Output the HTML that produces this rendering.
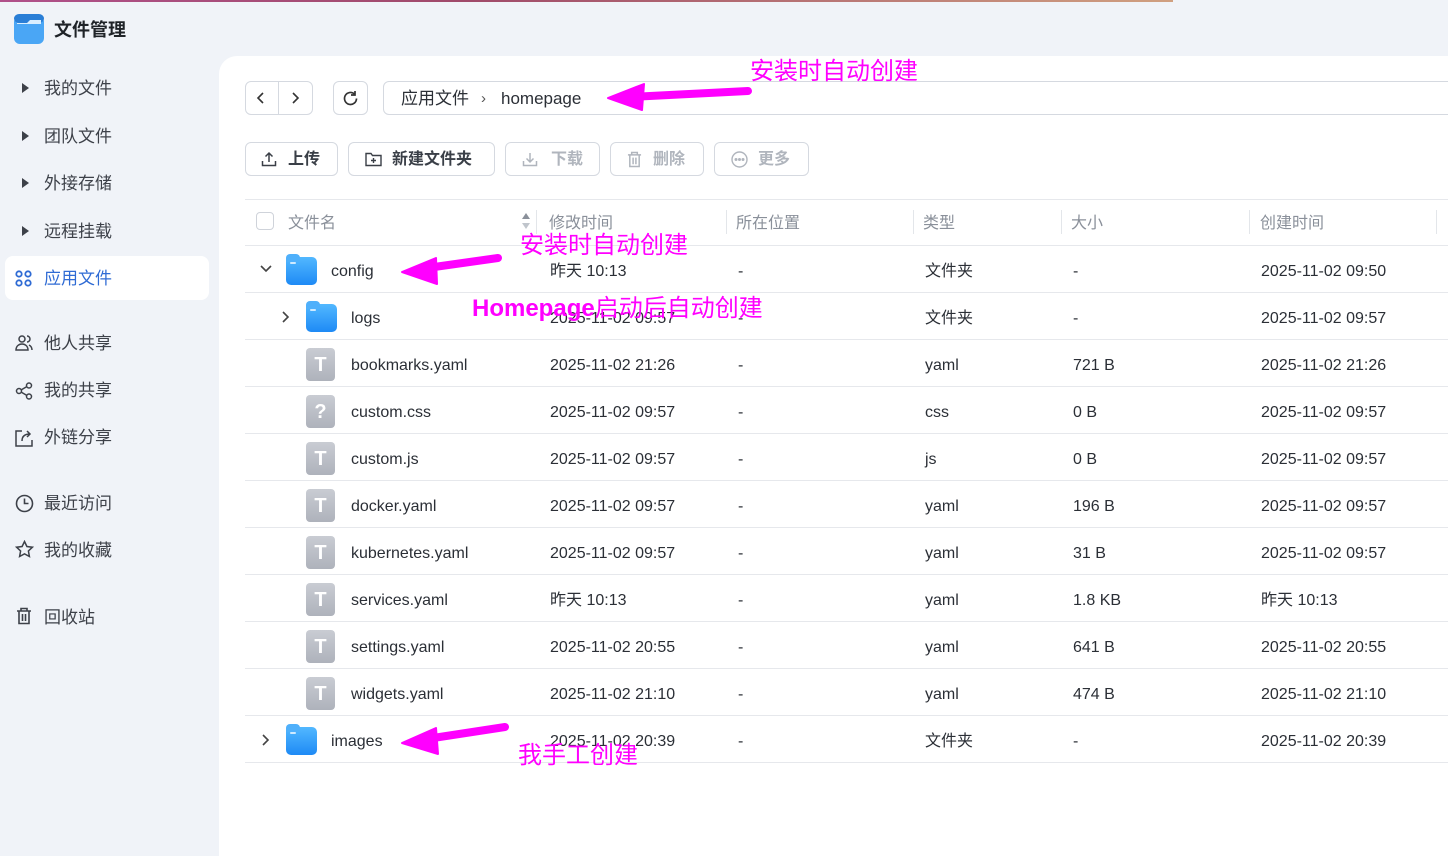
<!DOCTYPE html>
<html><head><meta charset="utf-8"><style>
*{margin:0;padding:0;box-sizing:border-box}
body{width:1448px;height:819px;overflow:hidden;background:#f0f3f8;font-family:"Liberation Sans","Noto Sans CJK SC",sans-serif;position:relative;color:#2b2f36}
.a{position:absolute;white-space:nowrap}
.topline{left:0;top:0;width:1173px;height:2px;background:linear-gradient(90deg,#b0508a,#a04a6a 40%,#d0a080)}
.nav{left:44px;font-size:17px;color:#3d4149;line-height:22px}
.tri{position:absolute;left:22px;width:0;height:0;border-top:5px solid transparent;border-bottom:5px solid transparent;border-left:7px solid #3d4149}
.main{left:219px;top:56px;width:1240px;height:800px;background:#fff;border-top-left-radius:18px}
.box{position:absolute;border:1px solid #d5d9e0;border-radius:6px;background:#fff}
.btn{position:absolute;top:142px;height:34px;border:1px solid #d5d9e0;border-radius:6px;font-size:16px;font-weight:bold;color:#3a3f47;line-height:34px}
.btn span{top:0}
.btn.dis{color:#b0b5bd}
.hdr{font-size:16px;color:#8a909a;top:214px;line-height:20px}
.sep{position:absolute;top:210px;width:1px;height:24px;background:#e3e6ea}
.hl{position:absolute;left:245px;width:1203px;height:1px;background:#e6e8ec}
.cell{position:absolute;font-size:16px;color:#2b2f36;line-height:20px;margin-top:2px}
.ann{position:absolute;color:#ff00ff;font-size:24px;line-height:28px;white-space:nowrap;font-family:"Noto Sans CJK SC","Liberation Sans",sans-serif}
.fold{position:absolute;width:31px;height:28px;border-radius:5px;background:linear-gradient(180deg,#52b8ff,#1e8af5)}
.fold:before{content:"";position:absolute;left:0;top:-3px;width:14px;height:8px;background:#4fb0fb;border-radius:4px 4px 0 0}
.fold:after{content:"";position:absolute;left:4px;top:5px;width:6px;height:2px;background:#cfeaff;border-radius:1px}
.file{position:absolute;width:29px;height:33px;border-radius:4px;background:linear-gradient(180deg,#c9ccd3,#aeb2bb);color:#fff;font-size:20px;font-weight:bold;text-align:center;line-height:34px}
</style></head><body>
<div class="a topline"></div>
<svg class="a" style="left:14px;top:14px" width="30" height="30" viewBox="0 0 30 30"><rect x="0" y="2" width="30" height="28" rx="6" fill="#4aa6f5"/><rect x="0" y="0" width="30" height="9" rx="5" fill="#2a7ed6"/><path d="M3 9h10l3-3h11v4H3z" fill="#d9eeff"/></svg>
<div class="a" style="left:54px;top:19px;font-size:18px;line-height:22px;font-weight:bold;color:#1f2328">文件管理</div>

<div class="tri" style="top:83px"></div><div class="a nav" style="top:78px">我的文件</div>
<div class="tri" style="top:131px"></div><div class="a nav" style="top:126px">团队文件</div>
<div class="tri" style="top:178px"></div><div class="a nav" style="top:173px">外接存储</div>
<div class="tri" style="top:226px"></div><div class="a nav" style="top:221px">远程挂载</div>
<div class="a" style="left:5px;top:256px;width:204px;height:44px;background:#fff;border-radius:8px"></div>
<svg class="a" style="left:15px;top:270px" width="17" height="17" viewBox="0 0 17 17" fill="none" stroke="#2f6bd4" stroke-width="1.8"><circle cx="4" cy="4" r="2.7"/><circle cx="13" cy="4" r="2.7"/><circle cx="4" cy="13" r="2.7"/><circle cx="13" cy="13" r="2.7"/></svg>
<div class="a nav" style="top:268px;color:#2f6bd4">应用文件</div>
<svg class="a" style="left:15px;top:334px" width="18" height="18" viewBox="0 0 18 18" fill="none" stroke="#3d4149" stroke-width="1.5"><circle cx="7" cy="5" r="3"/><path d="M1 16c0-4 3-6 6-6s6 2 6 6z"/><path d="M12 2a3 3 0 010 6M14 11c2 1 3 3 3 5"/></svg>
<div class="a nav" style="top:333px">他人共享</div>
<svg class="a" style="left:15px;top:382px" width="18" height="18" viewBox="0 0 18 18" fill="none" stroke="#3d4149" stroke-width="1.5"><circle cx="4" cy="9" r="2.5"/><circle cx="14" cy="3.5" r="2.5"/><circle cx="14" cy="14.5" r="2.5"/><path d="M6 8l6-3.5M6 10l6 3.5"/></svg>
<div class="a nav" style="top:380px">我的共享</div>
<svg class="a" style="left:15px;top:429px" width="18" height="18" viewBox="0 0 18 18" fill="none" stroke="#3d4149" stroke-width="1.5"><path d="M7 2H1v15h16v-6"/><path d="M7 12c0-5 3-7 8-7M12 2l3 3-3 3"/></svg>
<div class="a nav" style="top:427px">外链分享</div>
<svg class="a" style="left:15px;top:494px" width="19" height="19" viewBox="0 0 19 19" fill="none" stroke="#3d4149" stroke-width="1.6"><circle cx="9.5" cy="9.5" r="8"/><path d="M9.5 4.5v5h4"/></svg>
<div class="a nav" style="top:493px">最近访问</div>
<svg class="a" style="left:15px;top:540px" width="19" height="19" viewBox="0 0 19 19" fill="none" stroke="#3d4149" stroke-width="1.5"><path d="M9.5 1.5l2.4 5 5.5.7-4 3.8 1 5.5-4.9-2.7-4.9 2.7 1-5.5-4-3.8 5.5-.7z"/></svg>
<div class="a nav" style="top:540px">我的收藏</div>
<svg class="a" style="left:16px;top:607px" width="16" height="18" viewBox="0 0 16 18" fill="none" stroke="#3d4149" stroke-width="1.6"><path d="M1 4h14M5 4V1.5h6V4M3 4v12.5h10V4M6.5 7v7M9.5 7v7"/></svg>
<div class="a nav" style="top:607px">回收站</div>

<div class="a main"></div>
<div class="box" style="left:245px;top:81px;width:68px;height:34px"></div>
<div class="a" style="left:278px;top:82px;width:1px;height:32px;background:#d5d9e0"></div>
<svg class="a" style="left:255px;top:90px" width="12" height="16" viewBox="0 0 12 16" fill="none" stroke="#333" stroke-width="1.6"><path d="M8 3L3 8l5 5"/></svg>
<svg class="a" style="left:289px;top:90px" width="12" height="16" viewBox="0 0 12 16" fill="none" stroke="#333" stroke-width="1.6"><path d="M4 3l5 5-5 5"/></svg>
<div class="box" style="left:333px;top:81px;width:35px;height:34px"></div>
<svg class="a" style="left:341px;top:89px" width="19" height="19" viewBox="0 0 19 19" fill="none" stroke="#333" stroke-width="1.7"><path d="M15.5 9.5a6 6 0 11-2-4.5"/><path d="M14 2v4h-4"/></svg>
<div class="box" style="left:383px;top:81px;width:1080px;height:34px"></div>
<div class="a" style="left:401px;top:88px;font-size:17px;line-height:22px;color:#2b2f36">应用文件</div>
<div class="a" style="left:481px;top:88px;font-size:15px;line-height:22px;color:#555">›</div>
<div class="a" style="left:501px;top:88px;font-size:17px;line-height:22px;color:#2b2f36">homepage</div>

<div class="btn" style="left:245px;width:93px"><svg style="position:absolute;left:15px;top:8px" width="16" height="16" viewBox="0 0 16 16" fill="none" stroke="#3a3f47" stroke-width="1.5"><path d="M8 11V2M4.5 5.5L8 2l3.5 3.5M1.5 10v4.5h13V10"/></svg><span style="position:absolute;left:42px">上传</span></div>
<div class="btn" style="left:348px;width:147px"><svg style="position:absolute;left:16px;top:9px" width="17" height="15" viewBox="0 0 17 15" fill="none" stroke="#3a3f47" stroke-width="1.4"><path d="M1 1.5h5l1.5 2H16v10H1z"/><path d="M8.5 6v5M6 8.5h5"/></svg><span style="position:absolute;left:43px">新建文件夹</span></div>
<div class="btn dis" style="left:505px;width:95px"><svg style="position:absolute;left:16px;top:8px" width="16" height="16" viewBox="0 0 16 16" fill="none" stroke="#b0b5bd" stroke-width="1.5"><path d="M8 2v9M4.5 7.5L8 11l3.5-3.5M1.5 10v4.5h13V10"/></svg><span style="position:absolute;left:45px">下载</span></div>
<div class="btn dis" style="left:610px;width:94px"><svg style="position:absolute;left:16px;top:8px" width="15" height="17" viewBox="0 0 16 18" fill="none" stroke="#b0b5bd" stroke-width="1.6"><path d="M1 4h14M5 4V1.5h6V4M3 4v12.5h10V4M6.5 7v7M9.5 7v7"/></svg><span style="position:absolute;left:42px">删除</span></div>
<div class="btn dis" style="left:714px;width:95px"><svg style="position:absolute;left:16px;top:8px" width="17" height="17" viewBox="0 0 17 17" fill="none" stroke="#b0b5bd" stroke-width="1.4"><circle cx="8.5" cy="8.5" r="7.5"/><circle cx="5" cy="8.5" r=".8" fill="#b0b5bd"/><circle cx="8.5" cy="8.5" r=".8" fill="#b0b5bd"/><circle cx="12" cy="8.5" r=".8" fill="#b0b5bd"/></svg><span style="position:absolute;left:43px">更多</span></div>

<div class="hl" style="top:199px"></div>
<div class="a" style="left:256px;top:212px;width:18px;height:18px;border:1px solid #cfd3da;border-radius:4px"></div>
<div class="a hdr" style="left:288px">文件名</div>
<svg class="a" style="left:521px;top:211px" width="10" height="20" viewBox="0 0 10 20"><path d="M5 2l4 6H1z" fill="#8a909a"/><path d="M5 18l4-6H1z" fill="#c0c5cc"/></svg>
<div class="sep" style="left:536px"></div><div class="a hdr" style="left:549px">修改时间</div>
<div class="sep" style="left:726px"></div><div class="a hdr" style="left:736px">所在位置</div>
<div class="sep" style="left:913px"></div><div class="a hdr" style="left:923px">类型</div>
<div class="sep" style="left:1061px"></div><div class="a hdr" style="left:1071px">大小</div>
<div class="sep" style="left:1249px"></div><div class="a hdr" style="left:1260px">创建时间</div>
<div class="sep" style="left:1436px"></div>
<div class="hl" style="top:245px"></div>

<svg class="a" style="left:259px;top:264px" width="14" height="10" viewBox="0 0 14 10" fill="none" stroke="#444" stroke-width="1.6"><path d="M2 2l5 5 5-5"/></svg>
<div class="fold" style="left:286px;top:257px"></div>
<div class="cell" style="left:331px;top:260px">config</div>
<div class="cell" style="left:550px;top:260px">昨天 10:13</div><div class="cell" style="left:738px;top:260px">-</div><div class="cell" style="left:925px;top:260px">文件夹</div><div class="cell" style="left:1073px;top:260px">-</div><div class="cell" style="left:1261px;top:260px">2025-11-02 09:50</div>
<div class="hl" style="top:292px"></div>

<svg class="a" style="left:281px;top:310px" width="10" height="14" viewBox="0 0 10 14" fill="none" stroke="#444" stroke-width="1.6"><path d="M2 2l5 5-5 5"/></svg>
<div class="fold" style="left:306px;top:304px"></div>
<div class="cell" style="left:351px;top:307px">logs</div>
<div class="cell" style="left:550px;top:307px">2025-11-02 09:57</div><div class="cell" style="left:738px;top:307px">-</div><div class="cell" style="left:925px;top:307px">文件夹</div><div class="cell" style="left:1073px;top:307px">-</div><div class="cell" style="left:1261px;top:307px">2025-11-02 09:57</div>
<div class="hl" style="top:339px"></div>

<div class="file" style="left:306px;top:348px">T</div><div class="cell" style="left:351px;top:354px">bookmarks.yaml</div>
<div class="cell" style="left:550px;top:354px">2025-11-02 21:26</div><div class="cell" style="left:738px;top:354px">-</div><div class="cell" style="left:925px;top:354px">yaml</div><div class="cell" style="left:1073px;top:354px">721 B</div><div class="cell" style="left:1261px;top:354px">2025-11-02 21:26</div>
<div class="hl" style="top:386px"></div>

<div class="file" style="left:306px;top:395px">?</div><div class="cell" style="left:351px;top:401px">custom.css</div>
<div class="cell" style="left:550px;top:401px">2025-11-02 09:57</div><div class="cell" style="left:738px;top:401px">-</div><div class="cell" style="left:925px;top:401px">css</div><div class="cell" style="left:1073px;top:401px">0 B</div><div class="cell" style="left:1261px;top:401px">2025-11-02 09:57</div>
<div class="hl" style="top:433px"></div>

<div class="file" style="left:306px;top:442px">T</div><div class="cell" style="left:351px;top:448px">custom.js</div>
<div class="cell" style="left:550px;top:448px">2025-11-02 09:57</div><div class="cell" style="left:738px;top:448px">-</div><div class="cell" style="left:925px;top:448px">js</div><div class="cell" style="left:1073px;top:448px">0 B</div><div class="cell" style="left:1261px;top:448px">2025-11-02 09:57</div>
<div class="hl" style="top:480px"></div>

<div class="file" style="left:306px;top:489px">T</div><div class="cell" style="left:351px;top:495px">docker.yaml</div>
<div class="cell" style="left:550px;top:495px">2025-11-02 09:57</div><div class="cell" style="left:738px;top:495px">-</div><div class="cell" style="left:925px;top:495px">yaml</div><div class="cell" style="left:1073px;top:495px">196 B</div><div class="cell" style="left:1261px;top:495px">2025-11-02 09:57</div>
<div class="hl" style="top:527px"></div>

<div class="file" style="left:306px;top:536px">T</div><div class="cell" style="left:351px;top:542px">kubernetes.yaml</div>
<div class="cell" style="left:550px;top:542px">2025-11-02 09:57</div><div class="cell" style="left:738px;top:542px">-</div><div class="cell" style="left:925px;top:542px">yaml</div><div class="cell" style="left:1073px;top:542px">31 B</div><div class="cell" style="left:1261px;top:542px">2025-11-02 09:57</div>
<div class="hl" style="top:574px"></div>

<div class="file" style="left:306px;top:583px">T</div><div class="cell" style="left:351px;top:589px">services.yaml</div>
<div class="cell" style="left:550px;top:589px">昨天 10:13</div><div class="cell" style="left:738px;top:589px">-</div><div class="cell" style="left:925px;top:589px">yaml</div><div class="cell" style="left:1073px;top:589px">1.8 KB</div><div class="cell" style="left:1261px;top:589px">昨天 10:13</div>
<div class="hl" style="top:621px"></div>

<div class="file" style="left:306px;top:630px">T</div><div class="cell" style="left:351px;top:636px">settings.yaml</div>
<div class="cell" style="left:550px;top:636px">2025-11-02 20:55</div><div class="cell" style="left:738px;top:636px">-</div><div class="cell" style="left:925px;top:636px">yaml</div><div class="cell" style="left:1073px;top:636px">641 B</div><div class="cell" style="left:1261px;top:636px">2025-11-02 20:55</div>
<div class="hl" style="top:668px"></div>

<div class="file" style="left:306px;top:677px">T</div><div class="cell" style="left:351px;top:683px">widgets.yaml</div>
<div class="cell" style="left:550px;top:683px">2025-11-02 21:10</div><div class="cell" style="left:738px;top:683px">-</div><div class="cell" style="left:925px;top:683px">yaml</div><div class="cell" style="left:1073px;top:683px">474 B</div><div class="cell" style="left:1261px;top:683px">2025-11-02 21:10</div>
<div class="hl" style="top:715px"></div>

<svg class="a" style="left:261px;top:733px" width="10" height="14" viewBox="0 0 10 14" fill="none" stroke="#444" stroke-width="1.6"><path d="M2 2l5 5-5 5"/></svg>
<div class="fold" style="left:286px;top:727px"></div>
<div class="cell" style="left:331px;top:730px">images</div>
<div class="cell" style="left:550px;top:730px">2025-11-02 20:39</div><div class="cell" style="left:738px;top:730px">-</div><div class="cell" style="left:925px;top:730px">文件夹</div><div class="cell" style="left:1073px;top:730px">-</div><div class="cell" style="left:1261px;top:730px">2025-11-02 20:39</div>
<div class="hl" style="top:762px"></div>

<svg class="a" style="left:0;top:0" width="1448" height="819">
<g stroke="#ff00ff" stroke-linecap="round" fill="#ff00ff">
<line x1="748" y1="91" x2="630" y2="97" stroke-width="8"/><path d="M608 98L644 84L642 110Z" stroke-width="2" stroke-linejoin="round"/>
<line x1="498" y1="258" x2="420" y2="269" stroke-width="8"/><path d="M402 272L436 258L437 284Z" stroke-width="2" stroke-linejoin="round"/>
<line x1="505" y1="727" x2="420" y2="740" stroke-width="8"/><path d="M402 743L436 728L438 754Z" stroke-width="2" stroke-linejoin="round"/>
</g></svg>
<div class="ann" style="left:750px;top:55px">安装时自动创建</div>
<div class="ann" style="left:520px;top:229px">安装时自动创建</div>
<div class="ann" style="left:472px;top:292px"><b style="font-family:'Liberation Sans',sans-serif">Homepage</b>启动后自动创建</div>
<div class="ann" style="left:518px;top:739px">我手工创建</div>
</body></html>
